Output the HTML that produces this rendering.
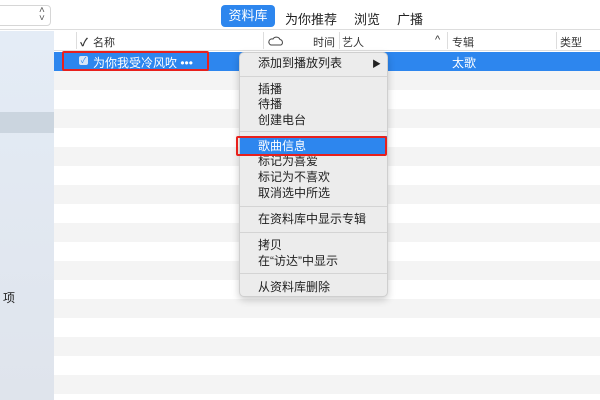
<!DOCTYPE html>
<html><head><meta charset="utf-8"><style>
*{margin:0;padding:0;box-sizing:border-box}
body{width:600px;height:400px;overflow:hidden;background:#fff;position:relative;font-family:"Liberation Sans","Noto Sans CJK SC",sans-serif;font-size:12px;color:#222}
.a{position:absolute}
.row{position:absolute;left:54px;width:546px;height:19px}
.g{background:#f4f4f4}
.mi{position:absolute;left:18px;font-size:12px;color:#222;line-height:16px}
.sep{position:absolute;left:240px;width:147px;height:1px;background:#d4d4d4}
.hd{position:absolute;top:34px;font-size:11px;color:#333}
.vd{position:absolute;top:32px;width:1px;height:17px;background:#ddd}
</style></head><body>
<div class="a" style="left:0;top:0;width:600px;height:30px;background:#fff;border-bottom:1px solid #ddd"></div>
<div class="a" style="left:-6px;top:5px;width:57px;height:21px;border:1px solid #d6d6d6;border-radius:4px;background:#fff"></div>
<div class="a" style="left:39px;top:7px;font-size:10px;color:#555;line-height:8px;text-align:center">˄<br>˅</div>
<div class="a" style="left:221px;top:5px;width:54px;height:22px;background:#2d86ee;border-radius:4px;color:#fff;font-size:13px;line-height:22px;text-align:center">资料库</div>
<div class="a" style="left:285px;top:9px;font-size:13px">为你推荐</div>
<div class="a" style="left:354px;top:9px;font-size:13px">浏览</div>
<div class="a" style="left:397px;top:9px;font-size:13px">广播</div>
<div class="a" style="left:0;top:31px;width:54px;height:369px;background:linear-gradient(#e4ecf6,#dfe4ec)"></div>
<div class="a" style="left:0;top:112px;width:54px;height:21px;background:#cbd5df"></div>
<div class="a" style="left:3px;top:289px;font-size:12px">项</div>
<div class="a" style="left:54px;top:31px;width:546px;height:20px;background:#fff;border-bottom:1px solid #ddd"></div>
<div class="vd" style="left:76px"></div><div class="vd" style="left:263px"></div><div class="vd" style="left:339px"></div><div class="vd" style="left:447px"></div><div class="vd" style="left:556px"></div>
<div class="hd" style="left:80px;font-weight:bold">✓</div>
<div class="hd" style="left:93px">名称</div>
<svg class="a" style="left:268px;top:35px" width="16" height="12"><path d="M3 10 H13 A3 3 0 0 0 12 4.5 A4 4 0 0 0 5 4 A3 3 0 0 0 3 10Z" fill="none" stroke="#444" stroke-width="1"/></svg>
<div class="hd" style="left:313px">时间</div>
<div class="hd" style="left:342px">艺人</div>
<div class="hd" style="left:435px">^</div>
<div class="hd" style="left:452px">专辑</div>
<div class="hd" style="left:560px">类型</div>
<div class="row" style="top:52px;background:#2d86ee"></div>
<div class="row g" style="top:71px"></div><div class="row g" style="top:109px"></div><div class="row g" style="top:147px"></div><div class="row g" style="top:185px"></div><div class="row g" style="top:223px"></div><div class="row g" style="top:261px"></div><div class="row g" style="top:299px"></div><div class="row g" style="top:337px"></div><div class="row g" style="top:375px"></div>
<div class="a" style="left:79px;top:56px;width:9px;height:9px;background:#d8e6f8;border-radius:2px;font-size:8px;line-height:9px;text-align:center;color:#2d86ee">✓</div>
<div class="a" style="left:93px;top:54px;color:#fff;font-size:12px">为你我受冷风吹 •••</div>
<div class="a" style="left:452px;top:54px;color:#fff;font-size:12px">太歌</div>
<div class="a" style="left:62px;top:51px;width:147px;height:20px;border:2px solid #e8201c;border-radius:2px"></div>
<div class="a" style="left:239px;top:52px;width:149px;height:245px;background:#ececec;border:1px solid #cfcfcf;border-radius:5px;box-shadow:0 3px 8px rgba(0,0,0,.2)">
<div class="a" style="left:0;top:83px;width:147px;height:18px;background:#2d86ee"></div>
<div class="mi" style="top:2px">添加到播放列表</div><div class="a" style="left:132px;top:4px;font-size:9px">▶</div>
<div class="mi" style="top:28px">插播</div>
<div class="mi" style="top:43px">待播</div>
<div class="mi" style="top:59px">创建电台</div>
<div class="mi" style="top:85px;color:#fff">歌曲信息</div>
<div class="mi" style="top:100px">标记为喜爱</div>
<div class="mi" style="top:116px">标记为不喜欢</div>
<div class="mi" style="top:132px">取消选中所选</div>
<div class="mi" style="top:158px">在资料库中显示专辑</div>
<div class="mi" style="top:184px">拷贝</div>
<div class="mi" style="top:200px">在“访达”中显示</div>
<div class="mi" style="top:226px">从资料库删除</div>
</div>
<div class="sep" style="top:76px"></div><div class="sep" style="top:131px"></div><div class="sep" style="top:206px"></div><div class="sep" style="top:232px"></div><div class="sep" style="top:273px"></div>
<div class="a" style="left:236px;top:136px;width:151px;height:20px;border:2px solid #e8201c;border-radius:2px"></div>
</body></html>
